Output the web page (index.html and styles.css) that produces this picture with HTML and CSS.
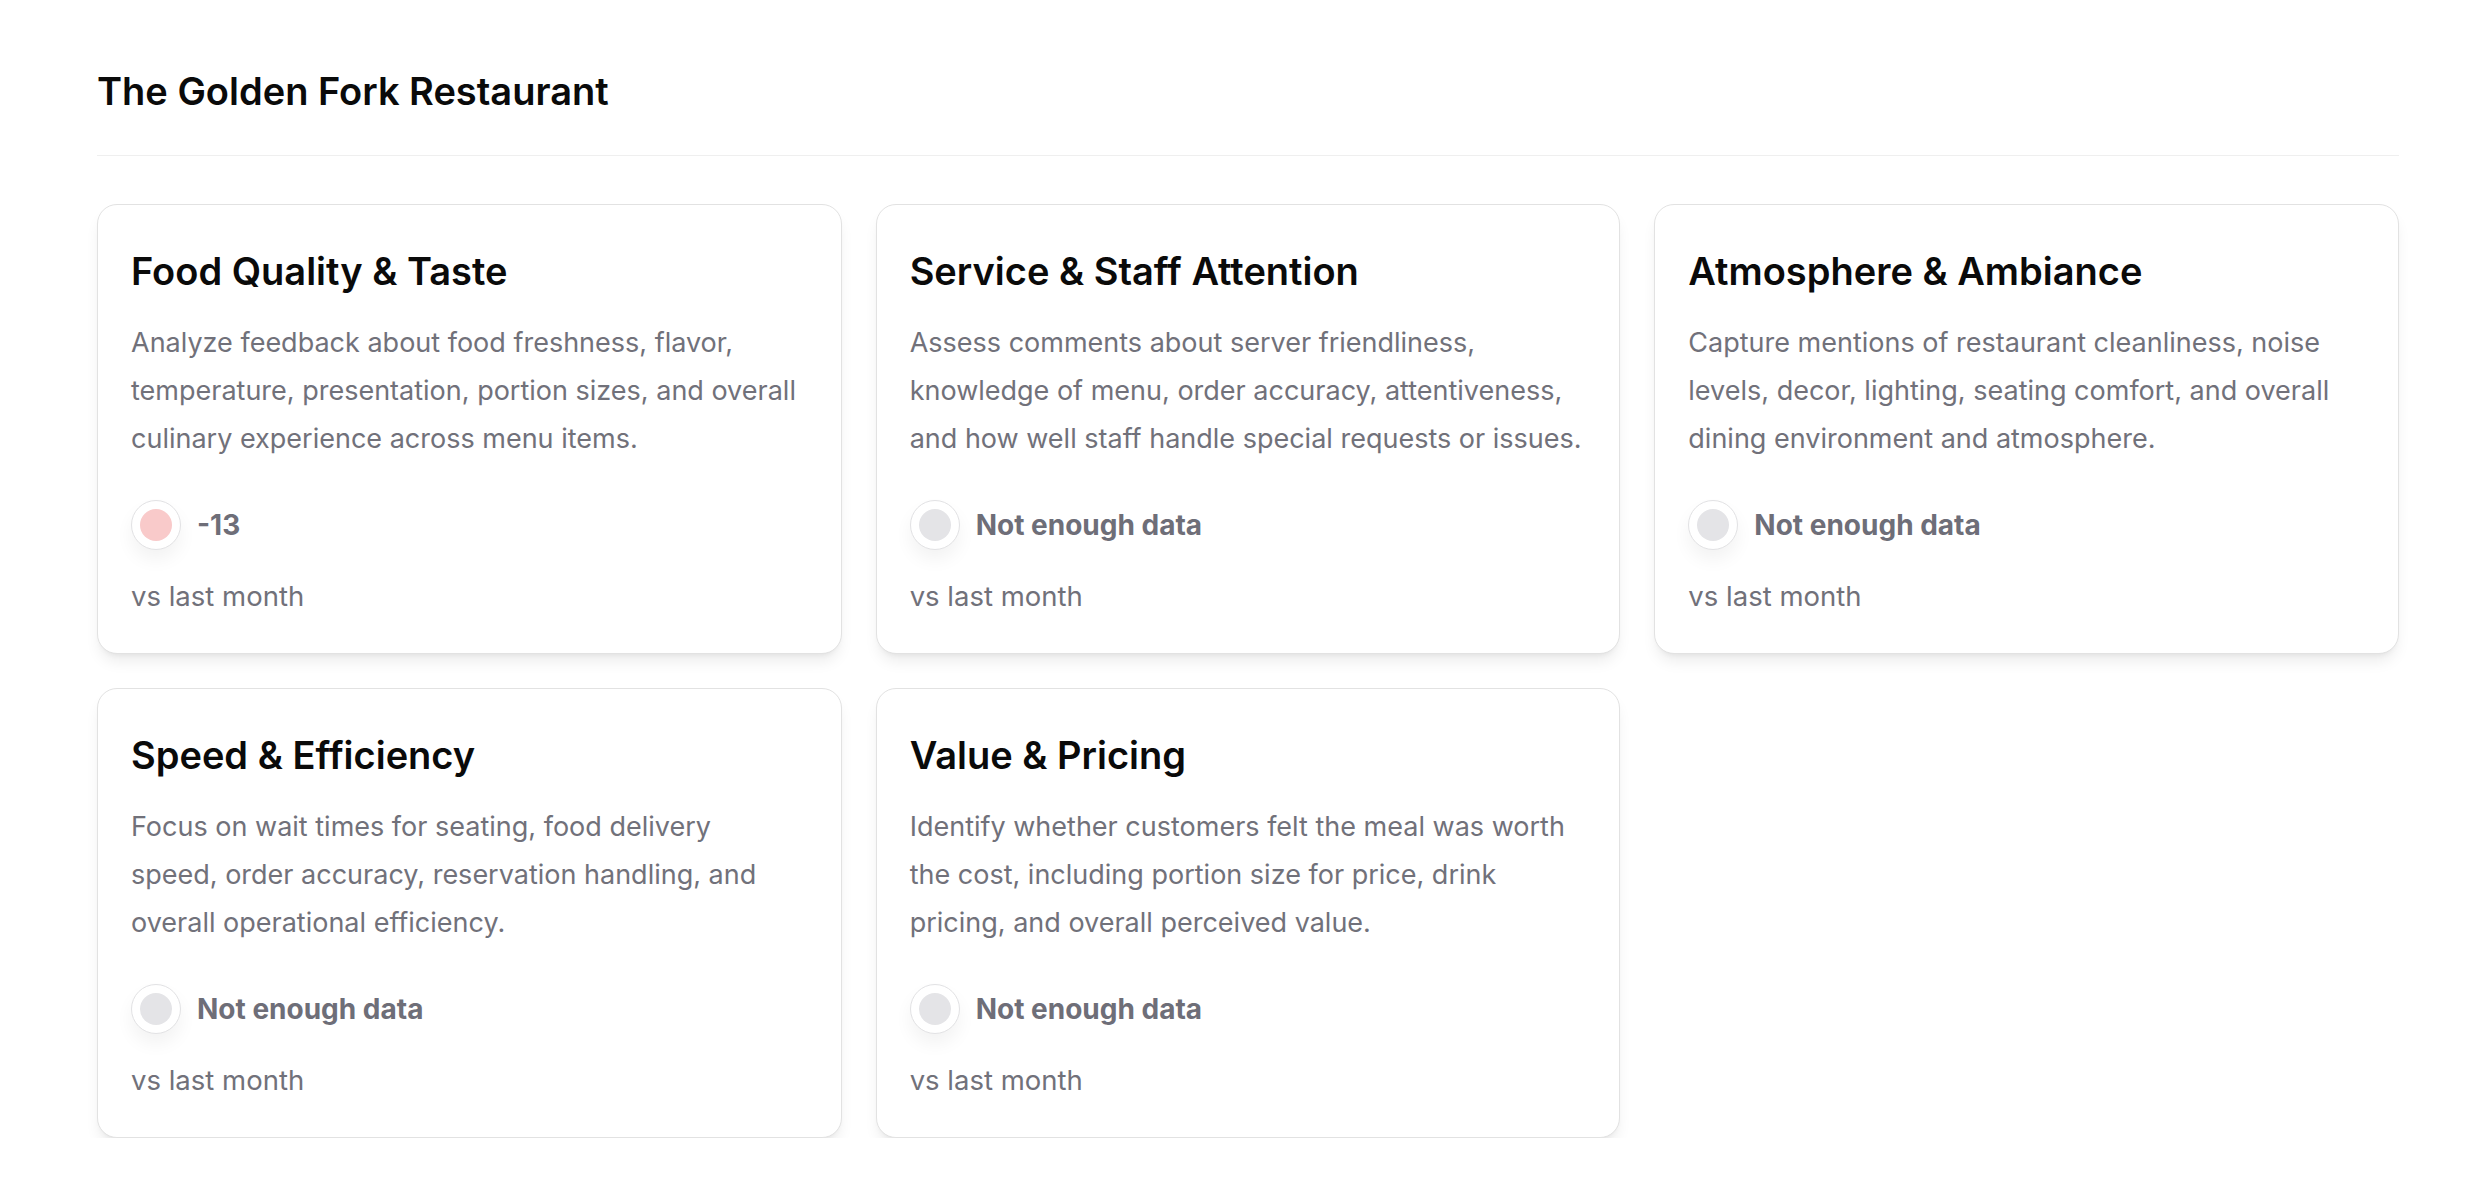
FILE: index.html
```html
<!DOCTYPE html>
<html lang="en">
<head>
<meta charset="utf-8">
<title>The Golden Fork Restaurant</title>
<link rel="stylesheet" href="styles.css">
</head>
<body>
<div class="page">
  <header class="page-header">
    <h1 class="page-title">The Golden Fork Restaurant</h1>
  </header>
  <section class="grid">
    <article class="card">
      <h2 class="card-title">Food Quality &amp; Taste</h2>
      <p class="card-desc">Analyze feedback about food freshness, flavor, temperature, presentation, portion sizes, and overall culinary experience across menu items.</p>
      <div class="status">
        <span class="dot-ring"><span class="dot dot-neg"></span></span>
        <span class="status-text">-13</span>
      </div>
      <div class="compare">vs last month</div>
    </article>
    <article class="card">
      <h2 class="card-title">Service &amp; Staff Attention</h2>
      <p class="card-desc">Assess comments about server friendliness, knowledge of menu, order accuracy, attentiveness, and how well staff handle special requests or issues.</p>
      <div class="status">
        <span class="dot-ring"><span class="dot dot-none"></span></span>
        <span class="status-text">Not enough data</span>
      </div>
      <div class="compare">vs last month</div>
    </article>
    <article class="card">
      <h2 class="card-title">Atmosphere &amp; Ambiance</h2>
      <p class="card-desc">Capture mentions of restaurant cleanliness, noise levels, decor, lighting, seating comfort, and overall dining environment and atmosphere.</p>
      <div class="status">
        <span class="dot-ring"><span class="dot dot-none"></span></span>
        <span class="status-text">Not enough data</span>
      </div>
      <div class="compare">vs last month</div>
    </article>
    <article class="card">
      <h2 class="card-title">Speed &amp; Efficiency</h2>
      <p class="card-desc">Focus on wait times for seating, food delivery<br>speed, order accuracy, reservation handling, and overall operational efficiency.</p>
      <div class="status">
        <span class="dot-ring"><span class="dot dot-none"></span></span>
        <span class="status-text">Not enough data</span>
      </div>
      <div class="compare">vs last month</div>
    </article>
    <article class="card">
      <h2 class="card-title">Value &amp; Pricing</h2>
      <p class="card-desc">Identify whether customers felt the meal was worth the cost, including portion size for price, drink pricing, and overall perceived value.</p>
      <div class="status">
        <span class="dot-ring"><span class="dot dot-none"></span></span>
        <span class="status-text">Not enough data</span>
      </div>
      <div class="compare">vs last month</div>
    </article>
  </section>
</div>
</body>
</html>
```
FILE: styles.css
```css
* { box-sizing: border-box; }
html, body { margin: 0; padding: 0; background: #ffffff; }
body {
  font-family: Inter, "Noto Sans", "Liberation Sans", sans-serif;
  color: #0a0a0a;
}
.page {
  width: 2302px;
  margin-left: 97px;
}
.page-header {
  padding-top: 69px;
  padding-bottom: 42px;
  border-bottom: 1px solid #efefef;
}
.page-title {
  margin: 0;
  font-size: 38px;
  line-height: 44px;
  font-weight: 600;
  color: #0a0a0a;
}
.grid {
  margin-top: 48px;
  display: grid;
  grid-template-columns: repeat(3, 1fr);
  gap: 34px;
}
.card {
  background: #fff;
  border: 1px solid #e2e2e2;
  border-radius: 20px;
  padding: 43px 33px 36px 33px;
  box-shadow: 0 10px 15px -3px rgba(0,0,0,0.08), 0 4px 6px -4px rgba(0,0,0,0.08);
}
.card-title {
  margin: 0;
  font-size: 38px;
  line-height: 46px;
  font-weight: 600;
  color: #0a0a0a;
}
.card-desc {
  margin: 25px 0 0 0;
  font-size: 27px;
  line-height: 48px;
  color: #71717a;
}
.status {
  margin-top: 37px;
  display: flex;
  align-items: center;
  gap: 16px;
  height: 50px;
}
.dot-ring {
  width: 50px;
  height: 50px;
  border-radius: 50%;
  border: 1px solid #e2e2e4;
  background: #fff;
  display: flex;
  align-items: center;
  justify-content: center;
  box-shadow: 0 10px 18px rgba(0,0,0,0.05);
  flex: none;
}
.dot {
  width: 32px;
  height: 32px;
  border-radius: 50%;
}
.dot-neg { background: #f9caca; }
.dot-none { background: #e4e4e7; }
.status-text {
  font-size: 28px;
  line-height: 34px;
  font-weight: 700;
  color: #6e6e78;
}
.compare {
  margin-top: 25px;
  font-size: 27.5px;
  line-height: 42px;
  color: #71717a;
}
```
